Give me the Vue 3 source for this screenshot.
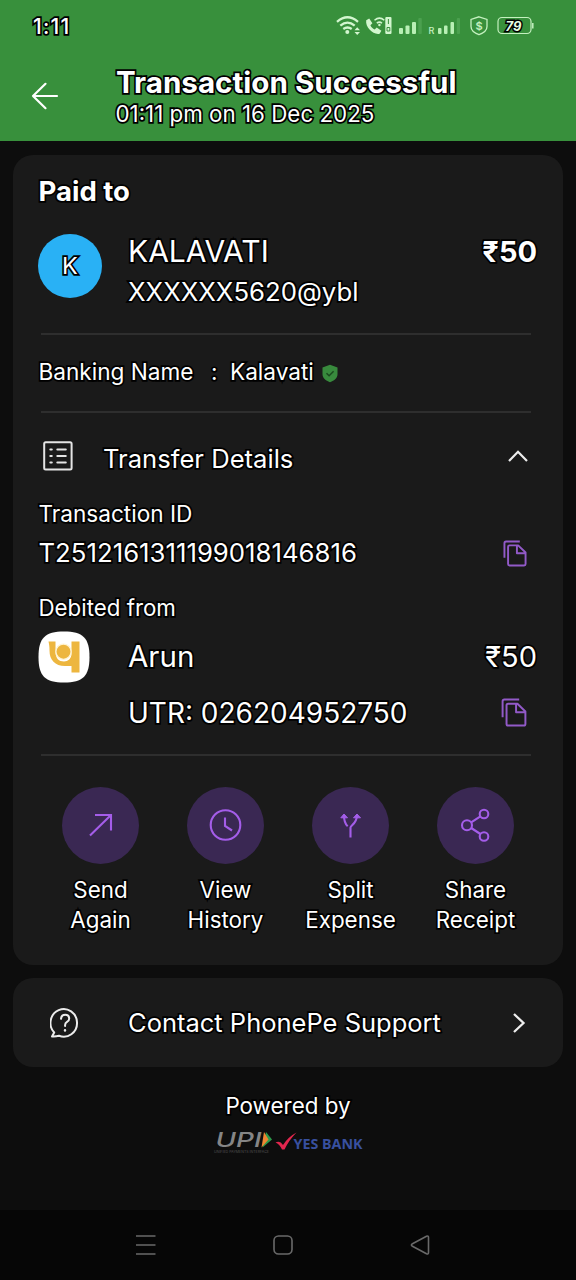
<script setup>
const actions = [
  { id: 'send', lines: ['Send', 'Again'] },
  { id: 'history', lines: ['View', 'History'] },
  { id: 'split', lines: ['Split', 'Expense'] },
  { id: 'share', lines: ['Share', 'Receipt'] }
]
</script>

<template>
  <div class="screen">
    <header class="top">
      <div class="status">
        <span class="clock">1:11</span>
        <svg class="status-icons" width="208" height="26" viewBox="332 13 208 26" fill="none">
          <g stroke="#d3f6cf" stroke-width="2.3">
            <path d="M337 21.8Q347.500 12.800 358 21.800M340.300 25.600Q347.500 19.600 354.700 25.600M343.300 29Q347.500 26 351.700 29" />
          </g>
          <circle cx="347.300" cy="32" r="2" fill="#d3f6cf" />
          <path d="M354.500 30.300L357.200 27.300L360 30.300ZM354.500 32L357.200 35L360 32Z" fill="#d3f6cf" />
          <path d="M366.200 20.300l3-1.800 3.200 4.700-2 2c.9 2 2.300 3.400 4.300 4.300l2-2 4.700 3.200-1.800 3c-6 1.500-14.500-6-13.400-13.400z" fill="#d3f6cf" />
          <path d="M374.500 20.300Q379.500 16 384.300 20.300M376.800 23.200Q379.500 21 382 23.200" stroke="#d3f6cf" stroke-width="1.500" />
          <circle cx="379.400" cy="25" r="1.200" fill="#d3f6cf" />
          <rect x="385.300" y="17" width="6.200" height="17" rx="1" fill="#d3f6cf" />
          <path d="M388.400 19v5M387 27.500h2.800v3.500h-2.800z" stroke="#38903c" stroke-width="1" />
          <g fill="#b9efb5">
            <rect x="399" y="28" width="4" height="6" rx="1" />
            <rect x="405.500" y="25.500" width="4" height="8.500" rx="1" />
            <rect x="412" y="22" width="4" height="12" rx="1" />
            <rect x="438" y="28" width="3.500" height="6" rx="1" />
            <rect x="444" y="25.500" width="3.500" height="8.500" rx="1" />
            <rect x="450.500" y="22" width="3.500" height="12" rx="1" />
          </g>
          <g fill="#4ba04f">
            <rect x="418.300" y="18" width="3.500" height="16" rx="1" />
            <rect x="456.800" y="18" width="3.200" height="16" rx="1" />
          </g>
          <text x="428.500" y="34" class="roam">R</text>
          <path d="M479 16.800l8 2.600v7.200c0 4-3.200 6.400-8 8.100-4.800-1.700-8-4.100-8-8.100v-7.200z" stroke="#c5f1c0" stroke-width="1.300" />
          <text x="479" y="30" text-anchor="middle" class="dollar">$</text>
          <rect x="498" y="17.500" width="33" height="16" rx="4" stroke="#c5f1c0" stroke-width="1.200" />
          <path d="M532.800 23v5.500" stroke="#c5f1c0" stroke-width="1.500" />
          <text x="505.500" y="30.500" class="battery">79</text>
        </svg>
      </div>
      <div class="title-row">
        <svg class="back" width="28" height="28" viewBox="31 82 28 28" fill="none" stroke="#fff" stroke-width="2.200" stroke-linecap="round" stroke-linejoin="round">
          <path d="M57 96H33M45.500 83.800L33 96l12.500 12.200" />
        </svg>
        <div class="titles">
          <h1 class="t title">Transaction Successful</h1>
          <p class="t subtitle">01:11 pm on 16 Dec 2025</p>
        </div>
      </div>
    </header>

    <main>
      <section class="card receipt">
        <h2 class="t paid">Paid to</h2>
        <div class="payee">
          <div class="avatar"><span class="t initial">K</span></div>
          <div class="payee-text">
            <div class="line"><span class="t name">KALAVATI</span><span class="t amount-bold">₹50</span></div>
            <div class="line"><span class="t vpa">XXXXXX5620@ybl</span></div>
          </div>
        </div>
        <hr />
        <div class="banking">
          <span class="t label bank-label">Banking Name</span>
          <span class="t label colon">:</span>
          <span class="t label bank-name">Kalavati</span>
          <svg class="shield" width="16" height="19" viewBox="0 0 16 19">
            <path d="M8 .8L15.500 3.500V10c0 4-3 6.700-7.500 8.200C3.500 16.700.5 14 .5 10V3.500z" fill="#388a3d" />
            <path d="M4.500 9.300l2.600 2.500 4.500-4.600" fill="none" stroke="#1a4a1e" stroke-width="1.500" />
          </svg>
        </div>
        <hr />
        <div class="transfer">
          <svg width="30" height="30" viewBox="0 0 30 30" fill="none" stroke="#e4e4e4" stroke-width="2" stroke-linecap="round">
            <rect x="1.200" y="1.200" width="27.400" height="27.400" rx="1.500" />
            <path d="M7.300 8.600h1.500M7.300 15h1.500M7.300 21.400h1.500M14.300 8.600h8.500M14.300 15h8.500M14.300 21.400h8.500" />
          </svg>
          <span class="t transfer-title">Transfer Details</span>
          <svg class="chev-up" width="22" height="14" viewBox="0 0 22 14" fill="none" stroke="#ededed" stroke-width="2.200"><path d="M2 12l9-9.200L20 12" /></svg>
        </div>
        <div class="row id-label"><span class="t label">Transaction ID</span></div>
        <div class="row id-row">
          <span class="t txn">T2512161311199018146816</span>
          <svg class="copy" width="24" height="27" viewBox="0 0 25 28" fill="none" stroke="#925ac8" stroke-width="2" stroke-linejoin="round">
            <path d="M1.500 18.500V3.200Q1.500 1.500 3.200 1.500H17.500M6.800 5.500h9L23.500 13v12q0 1.500-1.500 1.500H6.800q-1.500 0-1.500-1.500V7q0-1.500 1.500-1.500zM14.500 5.500v8.200h9" />
          </svg>
        </div>
        <div class="row debit-label"><span class="t label debit">Debited from</span></div>
        <div class="row account">
          <svg class="bank" width="52" height="52" viewBox="0 0 52 52">
            <path d="M26 .5C45 .5 51.500 7 51.500 26S45 51.500 26 51.500.5 45 .5 26 7 .5 26 .5z" fill="#fff" />
            <path d="M10.500 10.500H17.500v10c0 7 3.500 10 8.500 10 4 0 7.500-3 7.500-7.500V10.500H41.500v31h-8V35H27C17 35 11.500 29 11.500 19.500c0-4-.4-6.500-1-9z" fill="#edb63f" />
            <circle cx="25.500" cy="20.700" r="7.600" fill="#edb63f" stroke="#fff4d4" stroke-width="1.300" />
          </svg>
          <span class="t arun">Arun</span>
          <span class="t amount">₹50</span>
        </div>
        <div class="row utr-row">
          <span class="t utr">UTR: 026204952750</span>
          <svg class="copy" width="26" height="29" viewBox="0 0 25 28" fill="none" stroke="#925ac8" stroke-width="1.900" stroke-linejoin="round">
            <path d="M1.500 18.500V3.200Q1.500 1.500 3.200 1.500H17.500M6.800 5.500h9L23.500 13v12q0 1.500-1.500 1.500H6.800q-1.500 0-1.500-1.500V7q0-1.500 1.500-1.500zM14.500 5.500v8.200h9" />
          </svg>
        </div>
        <hr />
        <div class="actions">
          <div v-for="a in actions" :key="a.id" class="action">
            <div class="disc">
              <svg width="77" height="77" viewBox="0 0 77 77" fill="none" stroke="#a45de9" stroke-width="2.100">
                <path v-if="a.id === 'send'" d="M28 48.500L49 28M33 28h16V43.500" />
                <template v-else-if="a.id === 'history'">
                  <circle cx="38.500" cy="38" r="14.800" />
                  <path d="M38 30.500v8.500l7 4.500" />
                </template>
                <template v-else-if="a.id === 'split'">
                  <path d="M38.500 50.500V40.500c0-2 6.500-4 6.500-12.500M35.700 39.300C33 37 32 33.500 32 28" />
                  <path d="M28.800 30.800L32 27l3.500 3.800zM41.500 30.800L45 27l3.500 3.800z" fill="#a45de9" stroke-width="1" />
                </template>
                <template v-else>
                  <circle cx="47" cy="27" r="4.300" />
                  <circle cx="47" cy="49.500" r="4.300" />
                  <circle cx="30" cy="38.200" r="5" />
                  <path d="M34.200 35.400l9.200-6M34.200 41l9.200 6" />
                </template>
              </svg>
            </div>
            <span v-for="l in a.lines" :key="l" class="t caption">{{ l }}</span>
          </div>
        </div>
      </section>

      <section class="card support">
        <svg width="30" height="32" viewBox="0 0 30 32" fill="none" stroke="#ececec" stroke-width="2" stroke-linecap="round" stroke-linejoin="round">
          <path d="M2 29.500L4.200 25.500A13.300 13.800 0 1 1 9 28.800Q5.500 29.800 2 29.500z" />
          <path d="M11 11.800q.4-4 4.200-4t4 3.600q0 2.200-2.200 3.500t-1.900 4" />
          <path d="M15 23.300v.2" stroke-width="2.400" />
        </svg>
        <span class="t contact">Contact PhonePe Support</span>
        <svg class="chev-right" width="14" height="22" viewBox="0 0 14 22" fill="none" stroke="#ededed" stroke-width="2.300"><path d="M2 2l9.500 9L2 20" /></svg>
      </section>

      <footer class="powered">
        <span class="t powered-text">Powered by</span>
        <svg class="logos" width="152" height="26" viewBox="212 1129 152 26">
          <text class="upi" x="215.500" y="1147" textLength="46" lengthAdjust="spacingAndGlyphs">UPI</text>
          <path d="M266 1132l6 7.500-9.500 8z" fill="#2c9a4b" />
          <path d="M264 1132l4.500 7.500-7 8z" fill="#ef8632" />
          <text class="upi-sub" x="214" y="1152.500" textLength="55" lengthAdjust="spacingAndGlyphs">UNIFIED PAYMENTS INTERFACE</text>
          <path d="M275.500 1142.500Q280 1140 283 1145 288 1137 296.500 1132.500 289 1140 284.500 1149.500H282Q279.500 1144 275.500 1142.500z" fill="#e3264e" />
          <text class="yes" x="293.500" y="1149" textLength="69" lengthAdjust="spacingAndGlyphs">YES BANK</text>
        </svg>
      </footer>
    </main>

    <nav class="nav">
      <svg width="20" height="22" viewBox="0 0 20 22" fill="none" stroke="#696969" stroke-width="1.700"><path d="M0 2h19.500M0 11h19.500M0 20h19.500" /></svg>
      <svg width="20" height="20" viewBox="0 0 20 20" fill="none" stroke="#696969" stroke-width="1.600"><rect x="1" y="1" width="18" height="18" rx="4.500" /></svg>
      <svg width="20" height="20" viewBox="0 0 20 20" fill="none" stroke="#696969" stroke-width="1.600" stroke-linejoin="round"><path d="M2 9q-1.200 1 0 2l14.500 7.800q2 .8 2-1.200V2.400q0-2-2-1.200z" /></svg>
    </nav>
  </div>
</template>

<style>
html,
body {
  background: #0d0d0d;
}
</style>

<style scoped>
.screen {
  width: 576px;
  height: 1280px;
  display: flex;
  flex-direction: column;
  overflow: hidden;
  background: #0d0d0d;
  color: #fff;
  font-family: Inter, "Noto Sans", sans-serif;
}
h1, h2, p { margin: 0; }
svg { display: block; flex: none; }
.t, .clock {
  display: block;
  white-space: nowrap;
  font-weight: 400;
  -webkit-text-stroke: 3.4px #000;
  paint-order: stroke fill;
  stroke-linejoin: round;
}
.top { height: 141px; flex: none; background: #38903c; }
.status { height: 52px; display: flex; align-items: center; padding: 0 36px 0 33px; justify-content: space-between; }
.clock { font-size: 21px; font-weight: 500; letter-spacing: 1.2px; }
.roam { font: 500 9px Inter, sans-serif; fill: #c5f1c0; }
.dollar { font: 600 11px Inter, sans-serif; fill: #c5f1c0; }
.battery { font: italic 700 13px Inter, sans-serif; fill: #e6fbe4; stroke: #000; stroke-width: 3px; paint-order: stroke; }
.title-row { display: flex; padding-left: 31px; }
.back { margin-top: 30px; }
.titles { margin: 14px 0 0 57px; }
.title.title { font-size: 29.600px; line-height: 33px; font-weight: 700; }
.subtitle { font-size: 22.350px; line-height: 29px; margin-left: -0.5px; }
main { height: 1069px; flex: none; padding: 14px 13px 0; box-sizing: border-box; }
.card { background: #1a1a1a; border-radius: 20px; box-sizing: border-box; }
.receipt { height: 810px; padding: 0 26px 0 25px; }
.paid.paid { font-size: 27.500px; line-height: 72px; margin: 0 0 2px 0.5px; font-weight: 700; }
.payee { height: 104px; display: flex; padding-top: 5px; box-sizing: border-box; }
.avatar { width: 64px; height: 64px; flex: none; border-radius: 50%; background: #29b1f5; display: flex; align-items: center; justify-content: center; }
.initial { font-size: 23.500px; margin-bottom: 2px; }
.payee-text { flex: 1; margin: -3px 0 0 26px; }
.line { display: flex; justify-content: space-between; height: 40px; align-items: center; }
.name { font-size: 30px; }
.vpa { font-size: 25.750px; }
.amount-bold.amount-bold { font-size: 29px; font-weight: 700; }
hr { margin: 0 6px 0 3px; height: 2px; border: 0; background: #2e2e2e; }
.banking { height: 76px; display: flex; align-items: center; padding: 0 0 3px 0.5px; box-sizing: border-box; }
.label { font-size: 22.600px; }
.bank-label { width: 172.500px; }
.colon { width: 19px; }
.shield { margin: 4px 0 0 8.500px; }
.transfer { height: 88px; display: flex; align-items: center; padding: 0 0 2px 4.500px; box-sizing: border-box; }
.transfer-title { font-size: 25.600px; margin: 4px 0 0 30.500px; }
.chev-up { margin-left: auto; margin-right: 8px; }
.row { display: flex; align-items: center; }
.id-label { height: 25px; padding-left: 0.5px; }
.id-row { height: 54px; padding-left: 0.5px; }
.txn { font-size: 25.750px; margin-bottom: 1px; }
.copy { margin-left: auto; margin-right: 10px; }
.debit-label { height: 56px; padding-left: 0.5px; }
.debit { font-size: 22.300px; margin-bottom: 2px; }
.account { height: 41px; }
.arun { font-size: 29.500px; margin: 0 0 2px 38px; }
.amount { font-size: 29px; margin-left: auto; }
.utr-row { height: 70px; padding-left: 90px; margin-bottom: 7px; }
.utr { font-size: 28px; margin-top: 2px; }
.actions { display: flex; margin-top: 31px; }
.action { width: 125px; display: flex; flex-direction: column; align-items: center; flex: none; }
.disc { width: 77px; height: 77px; border-radius: 50%; background: #3a2853; margin-bottom: 11px; }
.caption { font-size: 22.400px; line-height: 29.500px; }
.support { height: 89px; margin-top: 13px; display: flex; align-items: center; padding: 0 37px 0 37px; }
.contact { font-size: 25.500px; margin-left: 48px; }
.chev-right { margin-left: auto; }
.powered { display: flex; flex-direction: column; align-items: center; padding-top: 24px; }
.powered-text { font-size: 22.400px; line-height: 30px; }
.logos { margin-top: 8px; }
.upi { font: italic 500 20px Inter, sans-serif; fill: #858585; }
.upi-sub { font: 400 4px Inter, sans-serif; fill: #505050; }
.yes { font: 700 14px "Noto Sans", sans-serif; fill: #38509f; }
.nav { height: 70px; display: flex; align-items: center; background: #060606; padding-left: 136px; gap: 117px; }
</style>
